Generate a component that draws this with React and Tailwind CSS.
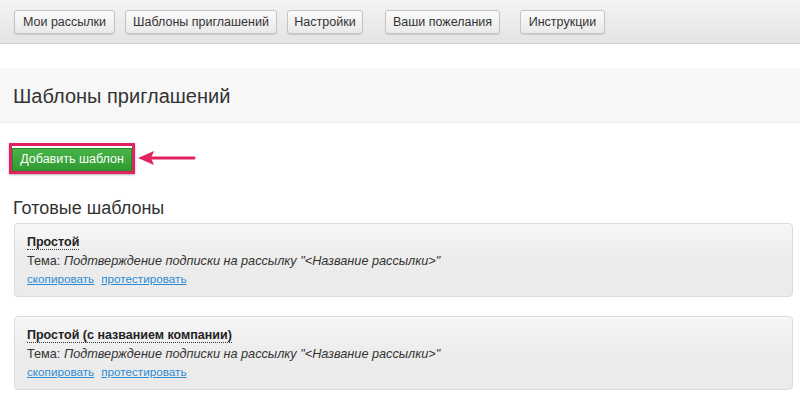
import React from 'react';

const navItems = [
  { label: 'Мои рассылки', cls: 'w-[101px]' },
  { label: 'Шаблоны приглашений', cls: 'w-[152px] ml-[10px]' },
  { label: 'Настройки', cls: 'w-[76px] ml-[10px]' },
  { label: 'Ваши пожелания', cls: 'w-[115px] ml-[22px]' },
  { label: 'Инструкции', cls: 'w-[85px] ml-[20px]' },
];

const templates = [
  { title: 'Простой' },
  { title: 'Простой (с названием компании)' },
];

const NavButton = ({ label, className = '' }) => (
  <button
    type="button"
    className={`h-[24px] rounded-[3px] border border-[#c4c4c4] bg-gradient-to-b from-[#fbfbfb] to-[#e9e9e9] text-[12.5px] text-[#333] shadow-[0_1px_1px_rgba(0,0,0,0.12)] leading-none ${className}`}
  >
    {label}
  </button>
);

const TemplateCard = ({ title }) => (
  <div className="ml-[14px] mr-[7px] rounded-[4px] border border-[#dcdcdc] bg-gradient-to-b from-[#f7f7f7] via-[#ececec] to-[#ebebeb] px-[12px] pt-[9px] h-[74px]">
    <div className="text-[12.5px] font-bold text-[#222] leading-[19px]">
      <span className="border-b border-dotted border-[#333]">{title}</span>
    </div>
    <div className="text-[12.7px] text-[#333] leading-[18px]">
      Тема: <i>Подтверждение подписки на рассылку "&lt;Название рассылки&gt;"</i>
    </div>
    <div className="text-[11.7px] leading-[18px] flex gap-[7px]">
      <a href="#" className="text-[#2b8cd6] underline">скопировать</a>
      <a href="#" className="text-[#2b8cd6] underline">протестировать</a>
    </div>
  </div>
);

const App = () => {
  return (
    <div className="w-[800px] h-[398px] bg-white overflow-hidden" style={{ fontFamily: '"Liberation Sans", Arial, sans-serif' }}>
      <div className="h-[44px] bg-gradient-to-b from-[#f4f4f4] to-[#e4e4e4] border-b border-[#cfcfcf] flex items-center pl-[14px] pt-[1px]">
        {navItems.map((n) => (
          <NavButton key={n.label} label={n.label} className={n.cls} />
        ))}
      </div>

      <div className="mt-[24px] h-[55px] bg-[#f7f7f7] border-b border-[#ececec] flex items-center px-[13px]">
        <h1 className="text-[20px] text-[#333] font-normal mt-[1px]">Шаблоны приглашений</h1>
      </div>

      <div className="flex items-center mt-[20px] ml-[9px]">
        <div className="border-[3px] border-[#e0225e] shadow-[0_1px_2px_rgba(0,0,0,0.3)]">
          <button
            type="button"
            className="h-[23px] w-[120px] bg-gradient-to-b from-[#48b448] to-[#2f9a2f] border border-[#2a8a2a] text-white text-[12.5px] leading-none"
          >
            Добавить шаблон
          </button>
        </div>
        <svg width="60" height="16" viewBox="0 0 60 16" className="ml-[1px]">
          <path d="M16 8 H58" stroke="#e0225e" strokeWidth="3" strokeLinecap="round" />
          <path d="M2 8 L18 1 L15 8 L18 15 Z" fill="#e0225e" />
        </svg>
      </div>

      <h2 className="mt-[22px] ml-[13px] text-[18px] text-[#333] font-normal leading-[24px]">Готовые шаблоны</h2>

      <div className="mt-[3px] flex flex-col gap-[19px]">
        {templates.map((t) => (
          <TemplateCard key={t.title} title={t.title} />
        ))}
      </div>
    </div>
  );
};

export default App;
